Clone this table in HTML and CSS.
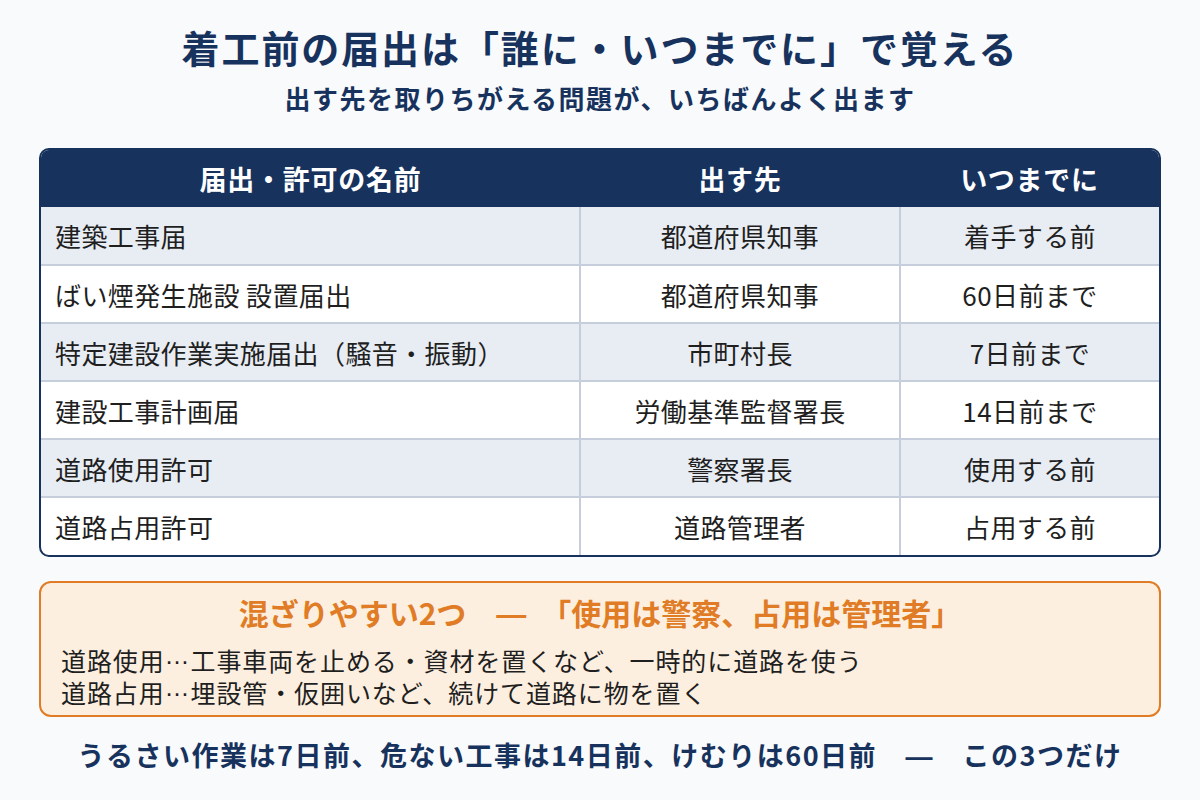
FILE: index.html
```html
<!DOCTYPE html>
<html lang="ja">
<head>
<meta charset="utf-8">
<link rel="stylesheet" href="styles.css">
</head>
<body>
<main class="page">
  <header class="head">
    <h1 class="title">着工前の届出は「誰に・いつまでに」で覚える</h1>
    <p class="subtitle">出す先を取りちがえる問題が、いちばんよく出ます</p>
  </header>

  <div class="table-wrap">
    <table class="tbl">
      <colgroup>
        <col class="c1"><col class="c2"><col class="c3">
      </colgroup>
      <thead>
        <tr><th>届出・許可の名前</th><th>出す先</th><th>いつまでに</th></tr>
      </thead>
      <tbody>
        <tr><td class="name">建築工事届</td><td>都道府県知事</td><td>着手する前</td></tr>
        <tr><td class="name">ばい煙発生施設 設置届出</td><td>都道府県知事</td><td>60日前まで</td></tr>
        <tr><td class="name">特定建設作業実施届出（騒音・振動）</td><td>市町村長</td><td>7日前まで</td></tr>
        <tr><td class="name">建設工事計画届</td><td>労働基準監督署長</td><td>14日前まで</td></tr>
        <tr><td class="name">道路使用許可</td><td>警察署長</td><td>使用する前</td></tr>
        <tr><td class="name">道路占用許可</td><td>道路管理者</td><td>占用する前</td></tr>
      </tbody>
    </table>
  </div>

  <section class="note">
    <h2 class="note-title">混ざりやすい2つ　<span class="dash">—</span>　「使用は警察、占用は管理者」</h2>
    <p class="note-line">道路使用<span class="ell">…</span>工事車両を止める・資材を置くなど、一時的に道路を使う</p>
    <p class="note-line">道路占用<span class="ell">…</span>埋設管・仮囲いなど、続けて道路に物を置く</p>
  </section>

  <p class="footer">うるさい作業は7日前、危ない工事は14日前、けむりは60日前　<span class="dash">—</span>　この3つだけ</p>
</main>
</body>
</html>
```

FILE: styles.css
```css
* { box-sizing: border-box; }
html, body { margin: 0; padding: 0; }
body {
  width: 1200px;
  height: 800px;
  background: #f8fafc;
  font-family: "Noto Sans CJK JP", "Noto Sans", sans-serif;
  color: #222;
  overflow: hidden;
}
.page {
  padding: 24px 39px 0;
  display: flex;
  flex-direction: column;
}
.head { text-align: center; color: #17325d; }
.title {
  margin: 0;
  font-size: 38px;
  line-height: 46px;
  font-weight: 700;
  letter-spacing: 1.9px;
}
.subtitle {
  margin: 11px 0 0;
  font-size: 26px;
  line-height: 34px;
  font-weight: 700;
  letter-spacing: 1.5px;
}
.table-wrap {
  margin-top: 33px;
  border: 2px solid #17325d;
  border-radius: 10px;
  overflow: hidden;
  background: #fff;
}
.tbl {
  width: 100%;
  border-collapse: collapse;
  table-layout: fixed;
}
.c1 { width: 539px; }
.c2 { width: 320px; }
.c3 { width: 259px; }
.tbl th {
  background: #17325d;
  color: #fff;
  height: 57px;
  font-size: 27px;
  letter-spacing: 0.75px;
  font-weight: 700;
  text-align: center;
  padding: 0;
}
.tbl td {
  height: 58px;
  font-size: 26px;
  letter-spacing: 0.4px;
  text-align: center;
  padding: 0;
  border-left: 2px solid #c6cedb;
  border-top: 2px solid #c6cedb;
  color: #1f1f1f;
}
.tbl td:first-child { border-left: none; }
.tbl tbody tr:first-child td { border-top: none; }
.tbl tbody tr:nth-child(odd) td { background: #e8edf4; }
.tbl td.name { text-align: left; padding-left: 14px; }

.dash { font-family: "Liberation Sans", sans-serif; }

.note {
  margin-top: 24px;
  border: 2px solid #e07c25;
  border-radius: 12px;
  background: #fdefe0;
  padding: 11px 20px 6px;
}
.note-title {
  margin: 0 0 12px;
  text-align: center;
  color: #e07c25;
  font-size: 30px;
  line-height: 36px;
  font-weight: 700;
}
.note-line {
  margin: 0;
  padding-top: 2px;
  height: 32px;
  font-family: "Liberation Sans", "Noto Sans CJK JP", sans-serif;
  font-size: 25px;
  letter-spacing: 0.9px;
  line-height: 30px;
  color: #1f1f1f;
}
.ell {
  vertical-align: 0.3em;
  line-height: 0;
}
.footer {
  margin: 21px 0 0;
  text-align: center;
  color: #17325d;
  font-size: 27px;
  letter-spacing: 1.5px;
  line-height: 34px;
  font-weight: 700;
}
```
